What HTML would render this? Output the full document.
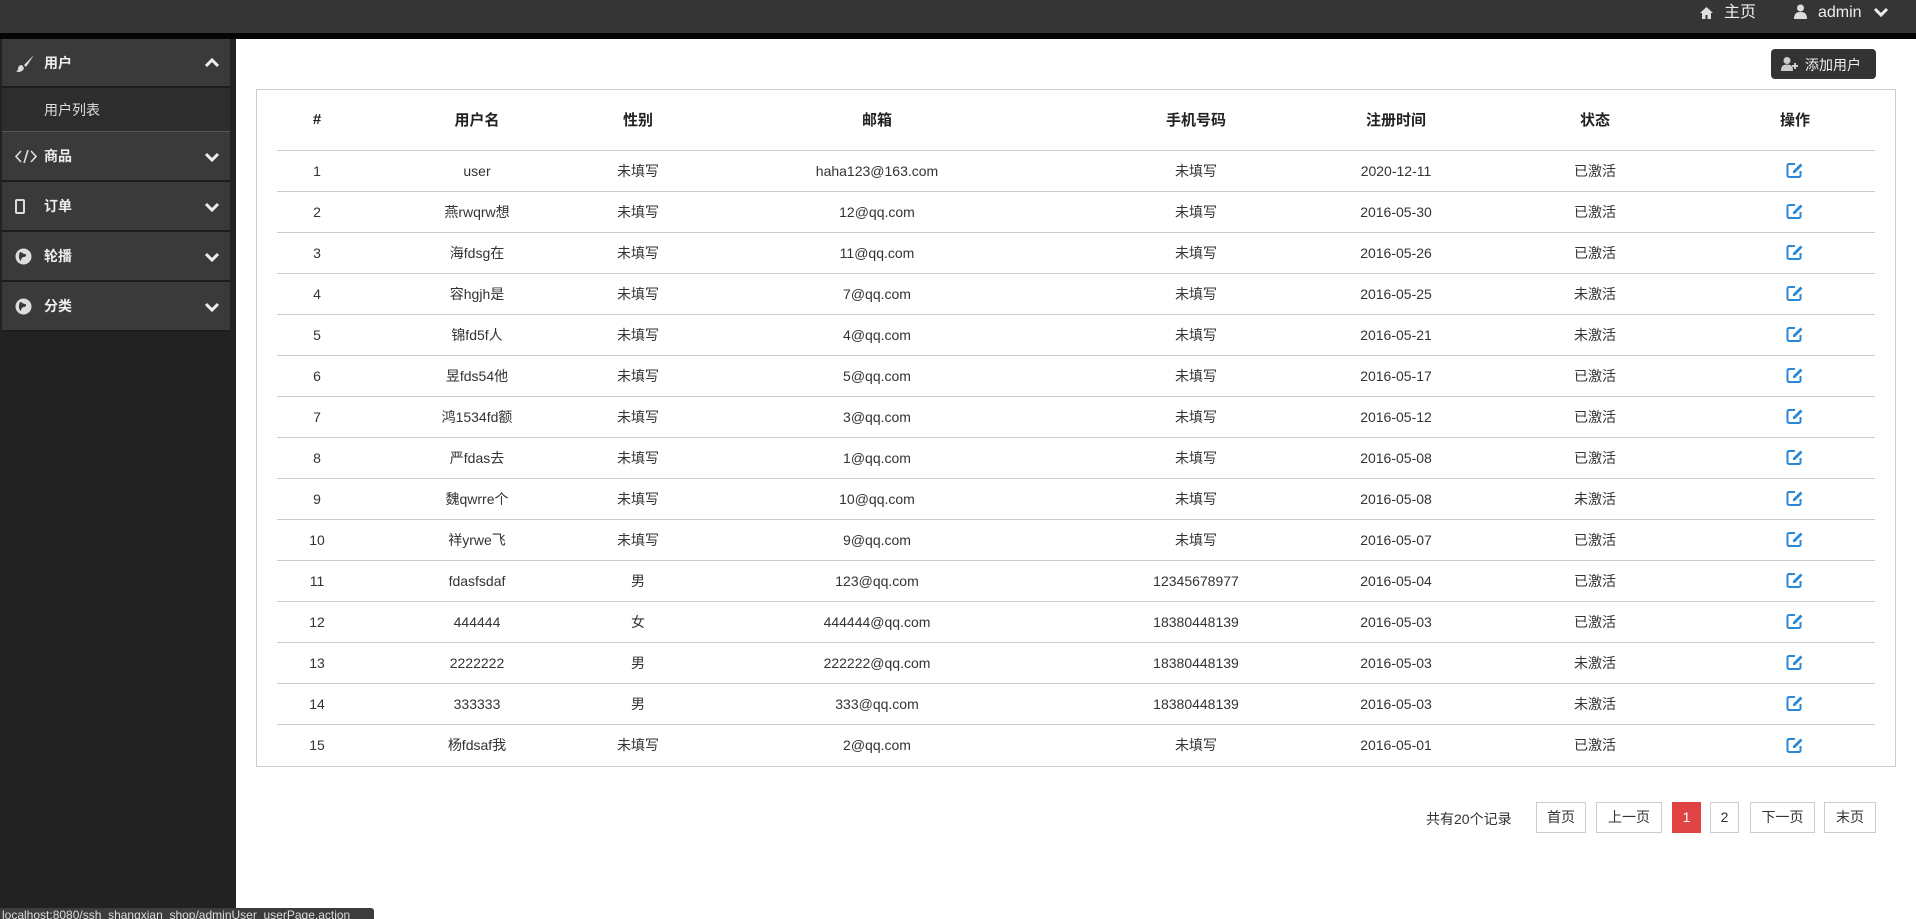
<!DOCTYPE html>
<html><head><meta charset="utf-8">
<style>
*{margin:0;padding:0;box-sizing:border-box}
body{width:1916px;height:919px;overflow:hidden;position:relative;background:#fff;font-family:"Liberation Sans","Noto Sans CJK SC",sans-serif;color:#333;font-size:14px}
.top{position:absolute;left:0;top:0;width:1916px;height:33px;background:#353535}
.band{position:absolute;left:0;top:33px;width:1916px;height:6px;background:#050505}
.side{position:absolute;left:0;top:39px;width:236px;height:880px;background:#222}
.item{position:absolute;left:2px;width:228px;background:#3a3a3a;border-bottom:2px solid #1c1c1c;color:#eee;font-weight:bold;font-size:14px}
.item span{position:absolute;left:42px;top:50%;transform:translateY(-50%)}
.item svg{position:absolute}
.sub{position:absolute;left:2px;top:88px;width:228px;height:44px;background:#2d2d2d;border-bottom:1px solid #555;color:#ddd;font-size:14px}
.sub span{position:absolute;left:42px;top:12px}
.nav{position:absolute;top:3px;color:#eee;font-size:16px;line-height:20px}
.btn{position:absolute;left:1771px;top:49px;width:105px;height:30px;background:#333;border-radius:4px;color:#eee;font-size:14px}
.box{position:absolute;left:256px;top:89px;width:1640px;height:678px;border:1px solid #ccc}
table{position:absolute;left:277px;top:89px;border-collapse:collapse;width:1598px;table-layout:fixed}
th{height:61px;font-size:15px;font-weight:bold;color:#222;text-align:center;border-bottom:1px solid #ccc}
td{height:41px;text-align:center;border-bottom:1px solid #ccc;font-size:14px;color:#333}
tr:last-child td{border-bottom:none}
.pg{position:absolute;top:802px;height:31px;border:1px solid #ccc;text-align:center;line-height:29px;font-size:14px;color:#333}
.status{position:absolute;left:0;top:908px;width:374px;height:11px;background:#3c3c3c;border-radius:0 3px 0 0;color:#ddd;font-size:12px;line-height:14px;overflow:hidden;padding-left:2px}
</style></head><body>
<div class="top"></div><div class="band"></div>
<svg style="position:absolute;left:1699px;top:6px" width="15" height="13" viewBox="0 0 15 13"><path d="M7.5 1L1 7h2v6h3.5V9h2v4H12V7h2z" fill="#ddd"/></svg>
<div class="nav" style="left:1724px">主页</div>
<svg style="position:absolute;left:1794px;top:4px" width="13" height="15" viewBox="0 0 13 15"><circle cx="6.5" cy="4" r="3.5" fill="#ddd"/><path d="M0 15c0-5 2-7 6.5-7S13 10 13 15z" fill="#ddd"/></svg>
<div class="nav" style="left:1818px">admin</div>
<svg style="position:absolute;left:1873px;top:7px" width="16" height="11" viewBox="0 0 16 11"><path d="M2 2l6 6 6-6" stroke="#eee" stroke-width="3" fill="none"/></svg>

<div class="side"></div>
<div class="item" style="top:39px;height:49px"><svg style="left:13px;top:15px" width="20" height="20" viewBox="0 0 20 20"><path d="M19 1L9 11l2 2z" fill="#ddd"/><path d="M7 11c-3 0-4 2-4 4s-2 2-2 2c2 2 7 1 8-3z" fill="#ddd"/></svg><span>用户</span><svg style="left:202px;top:18px" width="16" height="11" viewBox="0 0 16 11"><path d="M2 9l6-6 6 6" stroke="#eee" stroke-width="3" fill="none"/></svg></div>
<div class="sub"><span>用户列表</span></div>
<div class="item" style="top:132px;height:50px"><svg style="left:13px;top:17px" width="22" height="15" viewBox="0 0 22 15"><path d="M6 2L1 7.5 6 13M16 2l5 5.5L16 13M13 1L9 14" stroke="#ddd" stroke-width="1.6" fill="none"/></svg><span>商品</span><svg style="left:202px;top:20px" width="16" height="11" viewBox="0 0 16 11"><path d="M2 2l6 6 6-6" stroke="#eee" stroke-width="3" fill="none"/></svg></div>
<div class="item" style="top:182px;height:50px"><svg style="left:13px;top:17px" width="10" height="15" viewBox="0 0 10 15"><rect x="1" y="1" width="8" height="13" rx="1" fill="none" stroke="#ddd" stroke-width="2"/></svg><span>订单</span><svg style="left:202px;top:20px" width="16" height="11" viewBox="0 0 16 11"><path d="M2 2l6 6 6-6" stroke="#eee" stroke-width="3" fill="none"/></svg></div>
<div class="item" style="top:232px;height:50px"><svg style="left:13px;top:16px" width="17" height="17" viewBox="0 0 17 17"><circle cx="8.5" cy="8.5" r="8" fill="#ddd"/><path d="M5 4c2 0 3 2 5 2s1 3-1 3-3 2-3 4C4 12 3 8 5 4z" fill="#3a3a3a"/></svg><span>轮播</span><svg style="left:202px;top:20px" width="16" height="11" viewBox="0 0 16 11"><path d="M2 2l6 6 6-6" stroke="#eee" stroke-width="3" fill="none"/></svg></div>
<div class="item" style="top:282px;height:50px"><svg style="left:13px;top:16px" width="17" height="17" viewBox="0 0 17 17"><circle cx="8.5" cy="8.5" r="8" fill="#ddd"/><path d="M5 4c2 0 3 2 5 2s1 3-1 3-3 2-3 4C4 12 3 8 5 4z" fill="#3a3a3a"/></svg><span>分类</span><svg style="left:202px;top:20px" width="16" height="11" viewBox="0 0 16 11"><path d="M2 2l6 6 6-6" stroke="#eee" stroke-width="3" fill="none"/></svg></div>

<div class="btn"><svg style="position:absolute;left:10px;top:8px" width="18" height="14" viewBox="0 0 18 14"><circle cx="6" cy="3.5" r="3.5" fill="#ccc"/><path d="M0 14c0-5 2-6.5 6-6.5s6 1.5 6 6.5z" fill="#ccc"/><path d="M14 6v6M11 9h6" stroke="#ccc" stroke-width="2"/></svg><span style="position:absolute;left:34px;top:6px">添加用户</span></div>

<div class="box"></div>
<table>
<colgroup><col style="width:80px"><col style="width:240px"><col style="width:82px"><col style="width:396px"><col style="width:242px"><col style="width:158px"><col style="width:240px"><col style="width:160px"></colgroup>
<tr><th>#</th><th>用户名</th><th>性别</th><th>邮箱</th><th>手机号码</th><th>注册时间</th><th>状态</th><th>操作</th></tr>
<tr><td>1</td><td>user</td><td>未填写</td><td>haha123@163.com</td><td>未填写</td><td>2020-12-11</td><td>已激活</td><td>E</td></tr>
<tr><td>2</td><td>燕rwqrw想</td><td>未填写</td><td>12@qq.com</td><td>未填写</td><td>2016-05-30</td><td>已激活</td><td>E</td></tr>
<tr><td>3</td><td>海fdsg在</td><td>未填写</td><td>11@qq.com</td><td>未填写</td><td>2016-05-26</td><td>已激活</td><td>E</td></tr>
<tr><td>4</td><td>容hgjh是</td><td>未填写</td><td>7@qq.com</td><td>未填写</td><td>2016-05-25</td><td>未激活</td><td>E</td></tr>
<tr><td>5</td><td>锦fd5f人</td><td>未填写</td><td>4@qq.com</td><td>未填写</td><td>2016-05-21</td><td>未激活</td><td>E</td></tr>
<tr><td>6</td><td>昱fds54他</td><td>未填写</td><td>5@qq.com</td><td>未填写</td><td>2016-05-17</td><td>已激活</td><td>E</td></tr>
<tr><td>7</td><td>鸿1534fd额</td><td>未填写</td><td>3@qq.com</td><td>未填写</td><td>2016-05-12</td><td>已激活</td><td>E</td></tr>
<tr><td>8</td><td>严fdas去</td><td>未填写</td><td>1@qq.com</td><td>未填写</td><td>2016-05-08</td><td>已激活</td><td>E</td></tr>
<tr><td>9</td><td>魏qwrre个</td><td>未填写</td><td>10@qq.com</td><td>未填写</td><td>2016-05-08</td><td>未激活</td><td>E</td></tr>
<tr><td>10</td><td>祥yrwe飞</td><td>未填写</td><td>9@qq.com</td><td>未填写</td><td>2016-05-07</td><td>已激活</td><td>E</td></tr>
<tr><td>11</td><td>fdasfsdaf</td><td>男</td><td>123@qq.com</td><td>12345678977</td><td>2016-05-04</td><td>已激活</td><td>E</td></tr>
<tr><td>12</td><td>444444</td><td>女</td><td>444444@qq.com</td><td>18380448139</td><td>2016-05-03</td><td>已激活</td><td>E</td></tr>
<tr><td>13</td><td>2222222</td><td>男</td><td>222222@qq.com</td><td>18380448139</td><td>2016-05-03</td><td>未激活</td><td>E</td></tr>
<tr><td>14</td><td>333333</td><td>男</td><td>333@qq.com</td><td>18380448139</td><td>2016-05-03</td><td>未激活</td><td>E</td></tr>
<tr><td>15</td><td>杨fdsaf我</td><td>未填写</td><td>2@qq.com</td><td>未填写</td><td>2016-05-01</td><td>已激活</td><td>E</td></tr>
</table>
<script>
document.querySelectorAll('td:last-child').forEach(function(td){td.innerHTML='<svg width="18" height="17" viewBox="0 0 18 17" style="vertical-align:middle"><path d="M9 2H3a1.5 1.5 0 0 0-1.5 1.5v10A1.5 1.5 0 0 0 3 15h10a1.5 1.5 0 0 0 1.5-1.5V9" fill="none" stroke="#2a88d8" stroke-width="2"/><path d="M14.5 1.5l2 2L9 11H7V9z" fill="#2a88d8"/></svg>';});
</script>

<div style="position:absolute;left:1426px;top:809px;font-size:14px;color:#333">共有20个记录</div>
<div class="pg" style="left:1536px;width:50px">首页</div>
<div class="pg" style="left:1596px;width:66px">上一页</div>
<div class="pg" style="left:1672px;width:29px;background:#e04343;border-color:#e04343;color:#fff">1</div>
<div class="pg" style="left:1710px;width:29px">2</div>
<div class="pg" style="left:1750px;width:65px">下一页</div>
<div class="pg" style="left:1824px;width:52px">末页</div>

<div class="status">localhost:8080/ssh_shangxian_shop/adminUser_userPage.action</div>
</body></html>
